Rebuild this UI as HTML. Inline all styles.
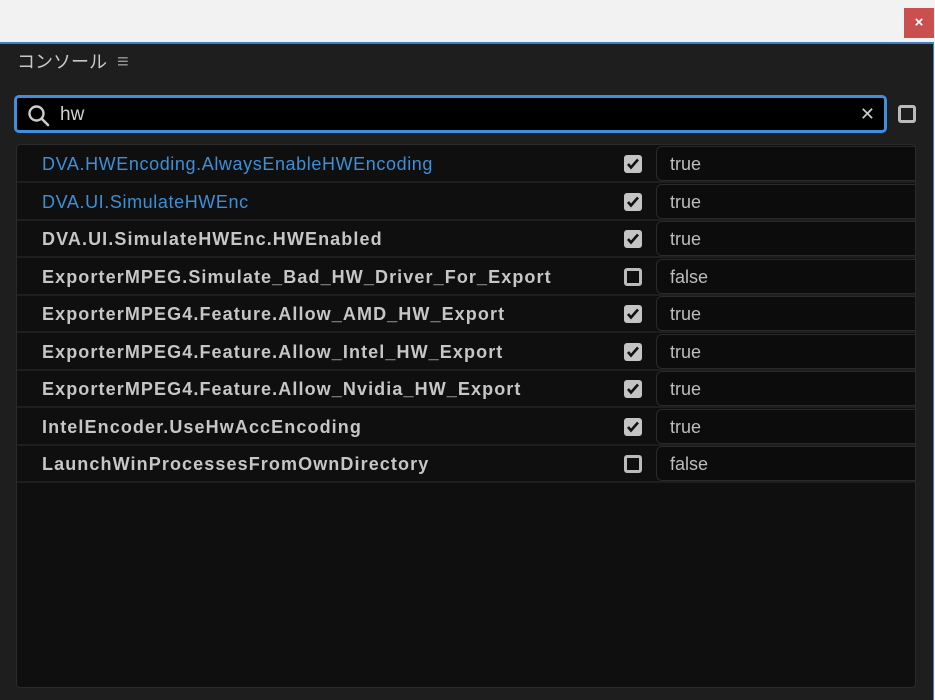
<!DOCTYPE html>
<html><head><meta charset="utf-8"><style>
*{margin:0;padding:0;box-sizing:border-box}
body{width:935px;height:700px;overflow:hidden;background:#f2f2f2;font-family:"Liberation Sans","Noto Sans CJK JP",sans-serif;position:relative}
.close{position:absolute;left:904px;top:8px;width:30px;height:30px;background:#c9504f;color:#fff;font-size:15px;font-weight:bold;text-align:center;line-height:30px}
.panel{position:absolute;left:0;top:42px;width:934px;height:658px;background:#1e1e1e;border-top:2px solid #3d7fc4;border-right:1px solid #3d7fc4}
.title{position:absolute;left:17px;top:4px;color:#c8c8c8;font-size:18px}
.title span{color:#999;margin-left:10px;font-size:20px}
.search{position:absolute;left:14px;top:51px;width:873px;height:38px;background:#000;border:3px solid #3f8ee0;border-radius:5px}
.search .t{position:absolute;left:43px;top:6px;color:#d0d0d0;font-size:19px}
.search .x{position:absolute;right:9px;top:6px;color:#ccc;font-size:18px}
.sbox{position:absolute;left:898px;top:61px;width:18px;height:18px;border:3px solid #bbb;border-radius:3px}
.list{position:absolute;left:16px;top:100px;width:900px;height:544px;background:#0f0f10;border:1px solid #2a2a2a;border-radius:4px}
.row{position:absolute;left:0;width:898px;height:38px;border-bottom:2px solid #1e1e1e;overflow:hidden}
.name{position:absolute;left:25px;top:9px;font-size:18px;color:#c6c6c6;font-weight:bold;white-space:nowrap;letter-spacing:1.1px}
.name.b{color:#3d8fd8;font-weight:normal;letter-spacing:0.6px}
.cb{position:absolute;left:607px;top:10px;width:18px;height:18px;border-radius:3px;background:#c4c4c4}
.cb.off{background:transparent;border:3px solid #bbb}
.cb svg{position:absolute;left:2px;top:2px}
.val{position:absolute;left:639px;top:1px;width:270px;height:35px;border:1px solid #2a2a2a;border-radius:6px;background:#0c0c0c;color:#bdbdbd;font-size:18px;padding:7px 0 0 13px}
</style></head><body>
<div class="close">×</div>
<div class="panel">
<div class="title">コンソール<span>≡</span></div>
<div class="search">
<svg style="position:absolute;left:10px;top:6px" width="24" height="24" viewBox="0 0 24 24"><circle cx="9.5" cy="9.5" r="7" fill="none" stroke="#ccc" stroke-width="2.4"/><line x1="14.5" y1="14.5" x2="21" y2="21" stroke="#ccc" stroke-width="2.6" stroke-linecap="round"/></svg>
<div class="t">hw</div><div class="x">✕</div></div>
<div class="sbox"></div>
<div class="list">
</div></div>
<div id="rows" style="position:absolute;left:17px;top:145px;width:898px;overflow:hidden;height:340px">
<div class="row" style="top:0"><div class="name b">DVA.HWEncoding.AlwaysEnableHWEncoding</div><div class="cb"><svg width="14" height="14" viewBox="0 0 14 14"><path d="M2 7l3 3.5 7-8" fill="none" stroke="#111" stroke-width="2.6"/></svg></div><div class="val">true</div></div>
<div class="row" style="top:37.5px"><div class="name b">DVA.UI.SimulateHWEnc</div><div class="cb"><svg width="14" height="14" viewBox="0 0 14 14"><path d="M2 7l3 3.5 7-8" fill="none" stroke="#111" stroke-width="2.6"/></svg></div><div class="val">true</div></div>
<div class="row" style="top:75px"><div class="name">DVA.UI.SimulateHWEnc.HWEnabled</div><div class="cb"><svg width="14" height="14" viewBox="0 0 14 14"><path d="M2 7l3 3.5 7-8" fill="none" stroke="#111" stroke-width="2.6"/></svg></div><div class="val">true</div></div>
<div class="row" style="top:112.5px"><div class="name">ExporterMPEG.Simulate_Bad_HW_Driver_For_Export</div><div class="cb off"></div><div class="val">false</div></div>
<div class="row" style="top:150px"><div class="name">ExporterMPEG4.Feature.Allow_AMD_HW_Export</div><div class="cb"><svg width="14" height="14" viewBox="0 0 14 14"><path d="M2 7l3 3.5 7-8" fill="none" stroke="#111" stroke-width="2.6"/></svg></div><div class="val">true</div></div>
<div class="row" style="top:187.5px"><div class="name">ExporterMPEG4.Feature.Allow_Intel_HW_Export</div><div class="cb"><svg width="14" height="14" viewBox="0 0 14 14"><path d="M2 7l3 3.5 7-8" fill="none" stroke="#111" stroke-width="2.6"/></svg></div><div class="val">true</div></div>
<div class="row" style="top:225px"><div class="name">ExporterMPEG4.Feature.Allow_Nvidia_HW_Export</div><div class="cb"><svg width="14" height="14" viewBox="0 0 14 14"><path d="M2 7l3 3.5 7-8" fill="none" stroke="#111" stroke-width="2.6"/></svg></div><div class="val">true</div></div>
<div class="row" style="top:262.5px"><div class="name">IntelEncoder.UseHwAccEncoding</div><div class="cb"><svg width="14" height="14" viewBox="0 0 14 14"><path d="M2 7l3 3.5 7-8" fill="none" stroke="#111" stroke-width="2.6"/></svg></div><div class="val">true</div></div>
<div class="row" style="top:300px"><div class="name">LaunchWinProcessesFromOwnDirectory</div><div class="cb off"></div><div class="val">false</div></div>
</div>
</body></html>
